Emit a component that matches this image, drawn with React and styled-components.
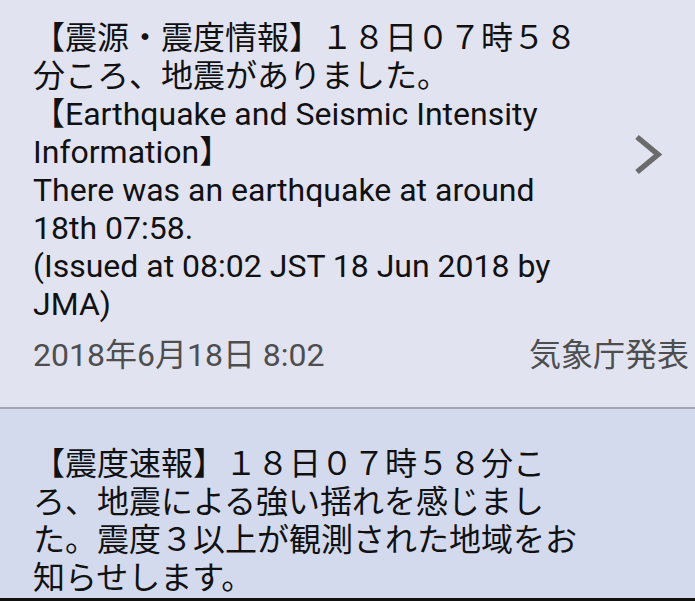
import React from "react";
import styled, { createGlobalStyle } from "styled-components";

const Global = createGlobalStyle`
  html, body { margin: 0; padding: 0; }
  body {
    width: 695px;
    height: 601px;
    overflow: hidden;
    font-family: Roboto, "Noto Sans CJK JP", sans-serif;
    -webkit-font-smoothing: antialiased;
  }
`;

const Page = styled.div`
  display: flex;
  flex-direction: column;
  width: 695px;
  height: 601px;
  overflow: hidden;
`;

const Card = styled.div`
  background: ${(p) => p.$bg};
  padding: ${(p) => p.$pad};
  flex: ${(p) => (p.$grow ? "1 1 auto" : "0 0 auto")};
  min-height: 0;
  overflow: hidden;
`;

const Body = styled.div`
  display: flex;
  align-items: flex-start;
`;

const Message = styled.div`
  width: 557px;
  font-size: 32px;
  line-height: 38px;
  color: #111;
  white-space: pre-wrap;
  line-break: strict;
`;

const ChevronBox = styled.div`
  flex: 1;
  display: flex;
  padding-left: 43px;
  padding-top: ${(p) => p.$top}px;
`;

const Footer = styled.div`
  display: flex;
  justify-content: space-between;
  margin-top: 13px;
  font-size: 32px;
  line-height: 38px;
  color: #4e4e4e;
`;

const Divider = styled.div`
  height: 2px;
  flex: 0 0 2px;
  background: #a3a5b4;
`;

const BottomEdge = styled.div`
  height: 3px;
  flex: 0 0 3px;
  background: #111;
`;

const Chevron = () => (
  <svg width="30" height="42" viewBox="0 0 30 42">
    <polyline
      points="4,3 25,20.5 4,38"
      fill="none"
      stroke="#6b6b6b"
      strokeWidth="5.5"
      strokeLinejoin="miter"
    />
  </svg>
);

export default function App() {
  return (
    <Page>
      <Global />
      <Card $bg="#e2e3f1" $pad="19px 6px 33px 33px">
        <Body>
          <Message>
            {"【震源・震度情報】１８日０７時５８分ころ、地震がありました。\n【Earthquake and Seismic Intensity Information】\nThere was an earthquake at around 18th 07:58.\n(Issued at 08:02 JST 18 Jun 2018 by JMA)"}
          </Message>
          <ChevronBox $top={115}>
            <Chevron />
          </ChevronBox>
        </Body>
        <Footer>
          <span>2018年6月18日 8:02</span>
          <span>気象庁発表</span>
        </Footer>
      </Card>
      <Divider />
      <Card $bg="#d4daee" $pad="36px 6px 0 33px" $grow>
        <Body>
          <Message>
            {"【震度速報】１８日０７時５８分ころ、地震による強い揺れを感じました。震度３以上が観測された地域をお知らせします。"}
          </Message>
        </Body>
      </Card>
      <BottomEdge />
    </Page>
  );
}
